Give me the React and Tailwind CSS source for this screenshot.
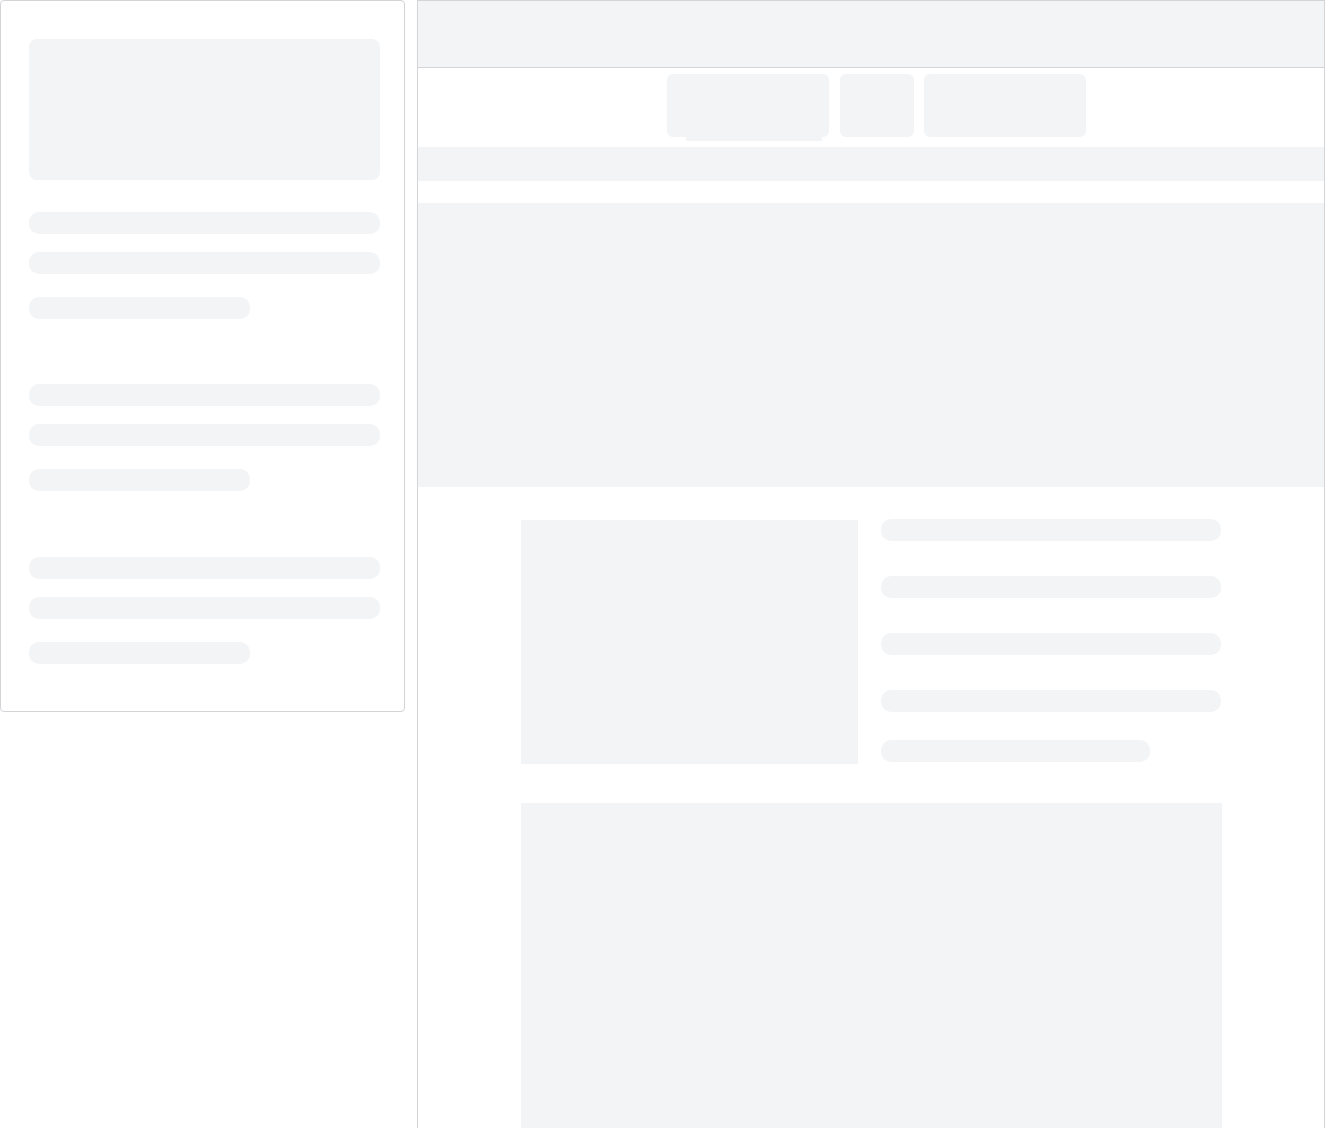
export default function App() {
  const Bar = ({ w = "w-full" }) => (
    <div className={`${w} h-[22px] rounded-[10px] bg-[#f3f4f6]`} />
  );
  const Group = ({ mt }) => (
    <div className={mt}>
      <Bar />
      <div className="mt-[18px]"><Bar /></div>
      <div className="mt-[23px]"><Bar w="w-[221px]" /></div>
    </div>
  );
  return (
    <div className="flex items-start bg-white min-h-[1128px] overflow-hidden h-[1128px]" style={{ fontFamily: "Inter, sans-serif" }}>
      <div className="w-[405px] shrink-0 border border-[#d4d4d8] rounded-[4px] pl-[28px] pr-[24px] pt-[38px] pb-[47px]">
        <div className="h-[141px] rounded-[8px] bg-[#f3f4f6]" />
        <Group mt="mt-[32px]" />
        <Group mt="mt-[65px]" />
        <Group mt="mt-[66px]" />
      </div>
      <div className="ml-[12px] w-[908px] shrink-0 border-l border-r border-t border-[#d4d4d8] h-[1200px]">
        <div className="h-[67px] bg-[#f3f4f6] border-b border-[#d4d4d8]" />
        <div className="h-[79px] flex justify-center pt-[6px] pl-[11px]">
          <div className="relative w-[162px] h-[63px] rounded-[6px] bg-[#f3f4f6]">
            <div className="absolute left-[19px] bottom-[-4px] w-[136px] h-[4px] bg-[#f3f4f6]" />
          </div>
          <div className="ml-[11px] w-[74px] h-[63px] rounded-[6px] bg-[#f3f4f6]" />
          <div className="ml-[10px] w-[162px] h-[63px] rounded-[6px] bg-[#f3f4f6]" />
        </div>
        <div className="h-[34px] bg-[#f3f4f6]" />
        <div className="h-[22px]" />
        <div className="h-[284px] bg-[#f3f4f6]" />
        <div className="w-[701px] mx-auto pt-[32px]">
          <div className="flex gap-[23px]">
            <div className="w-[337px] h-[244px] mt-[1px] bg-[#f3f4f6]" />
            <div className="w-[340px]">
              <Bar />
              <div className="mt-[35px]"><Bar /></div>
              <div className="mt-[35px]"><Bar /></div>
              <div className="mt-[35px]"><Bar /></div>
              <div className="mt-[28px]"><Bar w="w-[269px]" /></div>
            </div>
          </div>
          <div className="mt-[39px] h-[400px] bg-[#f3f4f6]" />
        </div>
      </div>
    </div>
  );
}
